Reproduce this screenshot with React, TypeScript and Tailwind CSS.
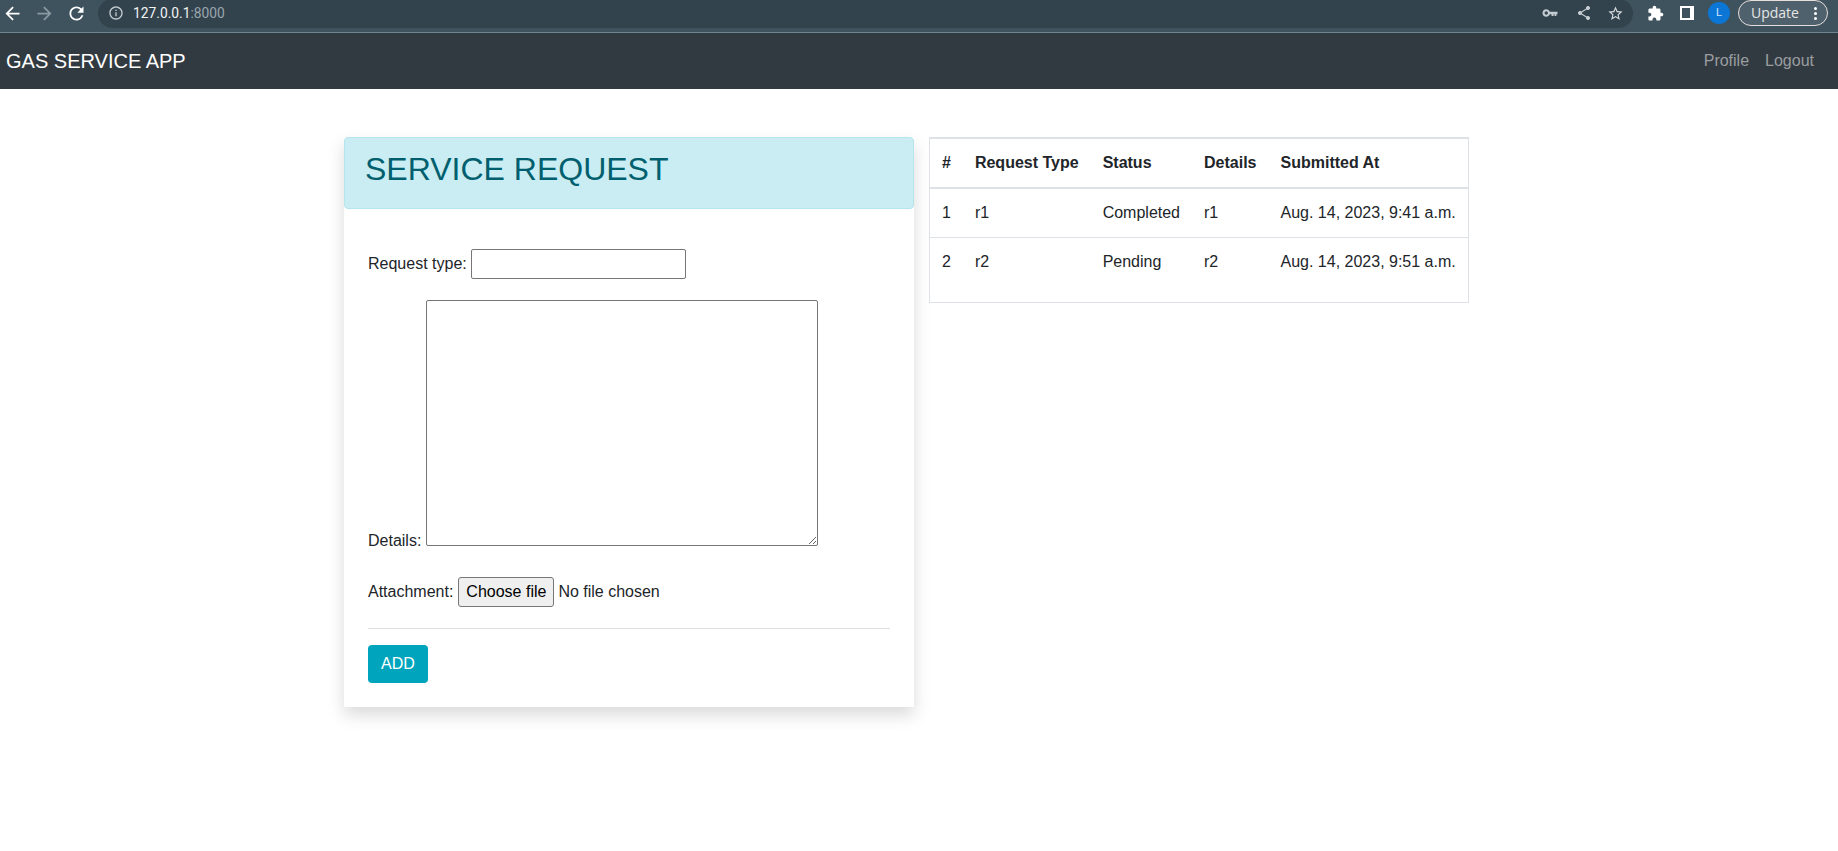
function Icon({ d, className }: { d: string; className: string }) {
  return (
    <svg viewBox="0 0 24 24" fill="currentColor" className={className}>
      <path d={d} />
    </svg>
  );
}

const icons = {
  back: 'M20 11H7.83l5.59-5.59L12 4l-8 8 8 8 1.41-1.41L7.83 13H20v-2z',
  reload:
    'M17.65 6.35A7.958 7.958 0 0 0 12 4c-4.42 0-7.99 3.58-7.99 8s3.57 8 7.99 8c3.73 0 6.84-2.55 7.73-6h-2.08A5.99 5.99 0 0 1 12 18c-3.31 0-6-2.69-6-6s2.69-6 6-6c1.66 0 3.14.69 4.22 1.78L13 11h7V4l-2.35 2.35z',
  info: 'M11 7h2v2h-2zm0 4h2v6h-2zm1-9C6.48 2 2 6.48 2 12s4.48 10 10 10 10-4.48 10-10S17.52 2 12 2zm0 18c-4.41 0-8-3.59-8-8s3.59-8 8-8 8 3.59 8 8-3.59 8-8 8z',
  key: 'M7 7c-2.8 0-5 2.2-5 5s2.2 5 5 5c2.2 0 4-1.4 4.7-3.2H14V16h2.8v-2.2H18V16h2.5v-2.2H22v-3.6H11.7C11 8.4 9.2 7 7 7zm0 7.2c-1.2 0-2.2-1-2.2-2.2s1-2.2 2.2-2.2 2.2 1 2.2 2.2-1 2.2-2.2 2.2z',
  star: 'M22 9.24l-7.19-.62L12 2 9.19 8.63 2 9.24l5.46 4.73L5.82 21 12 17.27 18.18 21l-1.63-7.03L22 9.24zM12 15.4l-3.76 2.27 1-4.28-3.32-2.88 4.38-.38L12 6.1l1.71 4.04 4.38.38-3.32 2.88 1 4.28L12 15.4z',
  puzzle:
    'M20.5 11H19V7c0-1.1-.9-2-2-2h-4V3.5C13 2.12 11.88 1 10.5 1S8 2.12 8 3.5V5H4c-1.1 0-1.99.9-1.99 2v3.8H3.5c1.49 0 2.7 1.21 2.7 2.7s-1.21 2.7-2.7 2.7H2V20c0 1.1.9 2 2 2h3.8v-1.5c0-1.49 1.21-2.7 2.7-2.7 1.49 0 2.7 1.21 2.7 2.7V22H17c1.1 0 2-.9 2-2v-4h1.5c1.38 0 2.5-1.12 2.5-2.5S21.88 11 20.5 11z',
};

const rows = [
  { id: 1, type: 'r1', status: 'Completed', details: 'r1', at: 'Aug. 14, 2023, 9:41 a.m.' },
  { id: 2, type: 'r2', status: 'Pending', details: 'r2', at: 'Aug. 14, 2023, 9:51 a.m.' },
];

function ShareIcon() {
  return (
    <svg viewBox="0 0 14 16" className="w-[14px] h-[16px] ml-[18px] text-[#c4ccd1]" fill="currentColor" stroke="currentColor">
      <path d="M11 3 3 8l8 5" fill="none" strokeWidth="1.2" />
      <circle cx="11" cy="3" r="1.6" />
      <circle cx="3" cy="8" r="1.6" />
      <circle cx="11" cy="13" r="1.6" />
    </svg>
  );
}

function BrowserBar() {
  return (
    <div className="h-[33px] pb-[6px] bg-[#3f535e] border-b border-[#6f8590] flex items-center text-[#f1f3f4] font-['Roboto',sans-serif]">
      <Icon d={icons.back} className="w-[21px] h-[21px] ml-[2px] text-white" />
      <Icon d={icons.back} className="w-[21px] h-[21px] ml-[11px] text-[#8a9aa3] rotate-180" />
      <Icon d={icons.reload} className="w-[21px] h-[21px] ml-[11px] text-white" />
      <div className="ml-[11px] h-[29px] flex-1 rounded-r-full rounded-l-full bg-[#33434d] flex items-center pl-[10px] pr-[9px]">
        <Icon d={icons.info} className="w-[16px] h-[16px] text-[#c4ccd1]" />
        <span className="ml-[9px] text-[13.8px]">
          127.0.0.1<span className="text-[#9aa6ad]">:8000</span>
        </span>
        <div className="flex-1" />
        <Icon d={icons.key} className="w-[18px] h-[18px] text-[#c4ccd1]" />
        <ShareIcon />
        <Icon d={icons.star} className="w-[17px] h-[17px] ml-[16px] text-[#d5dadd]" />
      </div>
      <Icon d={icons.puzzle} className="w-[17px] h-[17px] ml-[14px] text-white" />
      <div className="ml-[16px] w-[14px] h-[14px] bg-white pl-[2px] py-[2px]">
        <div className="w-[8px] h-full bg-[#3f535e]" />
      </div>
      <div className="ml-[14px] w-[22px] h-[22px] rounded-full bg-[#0b76d6] text-[#cfe6fb] text-[11px] flex items-center justify-center">
        L
      </div>
      <div className="ml-[8px] mr-[10px] h-[26px] w-[90px] rounded-full border border-[#e8dedb] bg-[#4f616c] flex items-center pl-[12px] text-[14px] text-[#e6e6e6] font-['Open_Sans',sans-serif]">
        Update
        <span className="ml-[15px] flex flex-col gap-[2px]">
          <span className="w-[3px] h-[3px] rounded-full bg-white" />
          <span className="w-[3px] h-[3px] rounded-full bg-white" />
          <span className="w-[3px] h-[3px] rounded-full bg-white" />
        </span>
      </div>
    </div>
  );
}

export default function App() {
  return (
    <div className="min-h-[851px] bg-white text-[#212529] text-[16px] leading-[24px] font-['Liberation_Sans',Arial,sans-serif] overflow-hidden">
      <BrowserBar />
      <nav className="h-[56px] bg-[#323a41] flex items-center justify-between pl-[6px] pr-[24px]">
        <span className="text-[20px] text-white">GAS SERVICE APP</span>
        <div className="flex gap-[16px] text-[#9a9da0]">
          <span>Profile</span>
          <span>Logout</span>
        </div>
      </nav>

      <main className="mt-[48px] ml-[344px] flex items-start gap-[15px]">
        {/* Request form */}
        <section className="w-[570px] h-[570px] bg-white shadow-[0_8px_16px_rgba(0,0,0,0.15)]">
          <div className="h-[72px] bg-[#c9edf3] border border-[#b5e5ed] rounded-[4px] pl-[20px] pt-[7px] text-[32px] leading-[48px] text-[#005f6e]">
            SERVICE REQUEST
          </div>
          <form className="pt-[40px] px-[24px]">
            <div className="h-[30px]">
              <label>Request type: </label>
              <input type="text" className="w-[215px] h-[30px] border border-[#767676] rounded-[2px] px-[2px]" />
            </div>
            <div className="mt-[21px]">
              <label>Details: </label>
              <textarea className="w-[392px] h-[246px] border border-[#767676] rounded-[2px] align-baseline" />
            </div>
            <div className="mt-[24px] h-[30px] flex items-center">
              <label className="mr-[5px]">Attachment:</label>
              <button type="button" className="w-[96px] h-[30px] bg-[#efefef] border border-[#767676] rounded-[3px] text-black">
                Choose file
              </button>
              <span className="ml-[4px]">No file chosen</span>
            </div>
            <hr className="mt-[21px] border-0 border-t border-[#dfdfdf]" />
            <button type="button" className="mt-[16px] w-[60px] h-[38px] bg-[#00a5bd] text-white rounded-[4px]">
              ADD
            </button>
          </form>
        </section>

        {/* Requests table */}
        <section className="w-[540px] h-[166px] border border-[#dee2e6] border-t-2">
          <table className="border-collapse text-left">
            <thead>
              <tr className="border-b-2 border-[#dee2e6] h-[49px]">
                <th className="px-[12px] font-bold">#</th>
                <th className="px-[12px] font-bold whitespace-nowrap">Request Type</th>
                <th className="px-[12px] font-bold">Status</th>
                <th className="px-[12px] font-bold">Details</th>
                <th className="px-[12px] font-bold whitespace-nowrap">Submitted At</th>
              </tr>
            </thead>
            <tbody>
              {rows.map((r, i) => (
                <tr key={r.id} className={i === 0 ? 'border-b border-[#dee2e6] h-[49px]' : 'h-[49px]'}>
                  <td className="px-[12px]">{r.id}</td>
                  <td className="px-[12px]">{r.type}</td>
                  <td className="px-[12px]">{r.status}</td>
                  <td className="px-[12px]">{r.details}</td>
                  <td className="px-[12px] whitespace-nowrap">{r.at}</td>
                </tr>
              ))}
            </tbody>
          </table>
        </section>
      </main>
    </div>
  );
}
